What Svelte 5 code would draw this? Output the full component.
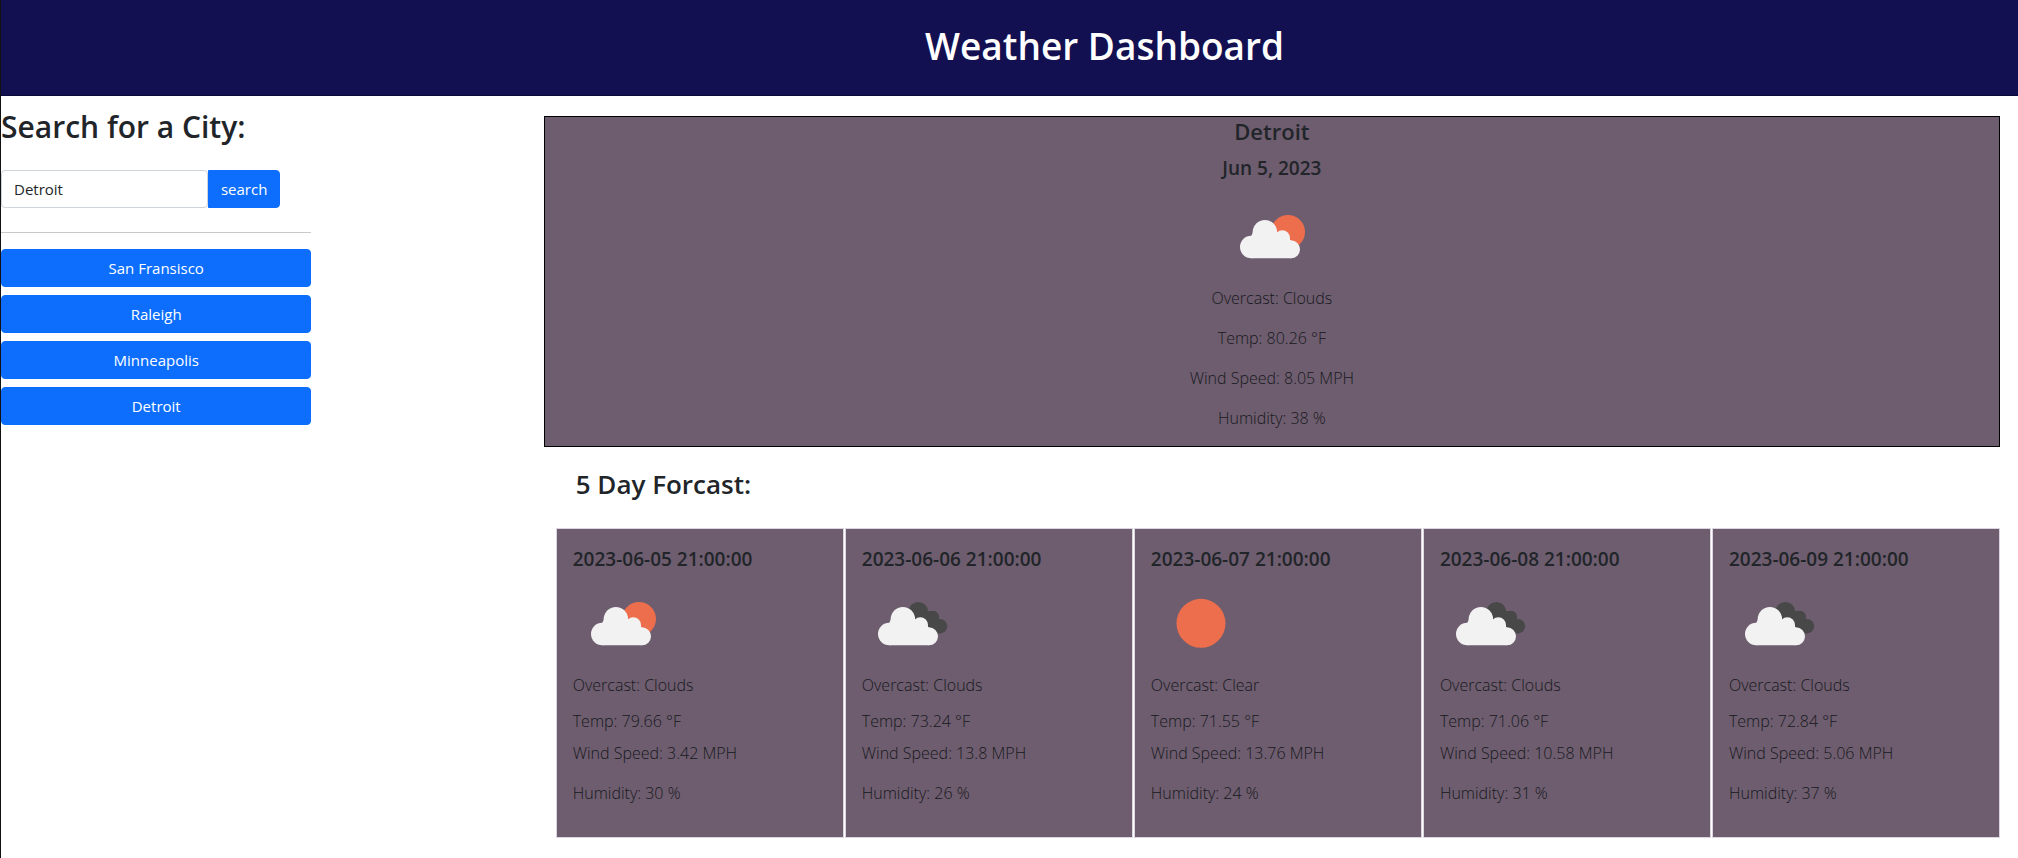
<script>
  let city = $state('Detroit');
  const cities = ['San Fransisco', 'Raleigh', 'Minneapolis', 'Detroit'];
  const current = {
    city: 'Detroit',
    date: 'Jun 5, 2023',
    icon: 'few',
    sky: 'Clouds',
    temp: '80.26',
    wind: '8.05',
    humidity: '38'
  };
  const days = [
    { date: '2023-06-05 21:00:00', icon: 'few', sky: 'Clouds', temp: '79.66', wind: '3.42', humidity: '30' },
    { date: '2023-06-06 21:00:00', icon: 'broken', sky: 'Clouds', temp: '73.24', wind: '13.8', humidity: '26' },
    { date: '2023-06-07 21:00:00', icon: 'clear', sky: 'Clear', temp: '71.55', wind: '13.76', humidity: '24' },
    { date: '2023-06-08 21:00:00', icon: 'broken', sky: 'Clouds', temp: '71.06', wind: '10.58', humidity: '31' },
    { date: '2023-06-09 21:00:00', icon: 'broken', sky: 'Clouds', temp: '72.84', wind: '5.06', humidity: '37' }
  ];
</script>

{#snippet cloud()}
  <g fill="#f2f2f2">
    <circle cx="29.3" cy="61" r="11.3" />
    <circle cx="42.9" cy="46.2" r="12.2" />
    <circle cx="60.3" cy="52" r="7.7" />
    <circle cx="69" cy="63.3" r="9" />
    <path d="M29.3 72.3V49.7L31 46.2H55L60.3 52H68V54.3H69V72.3Z" />
  </g>
{/snippet}

{#snippet weatherIcon(kind)}
  <svg class="icon" viewBox="0 0 100 100" aria-hidden="true">
    {#if kind === 'clear'}
      <circle cx="50" cy="50.3" r="24.5" fill="#ec6e4c" />
    {:else if kind === 'few'}
      <circle cx="66" cy="46" r="17" fill="#ec6e4c" />
      {@render cloud()}
    {:else}
      <g fill="#484848">
        <circle cx="56.3" cy="38.7" r="9.8" />
        <circle cx="70.7" cy="44" r="6.3" />
        <circle cx="78" cy="53.2" r="7.2" />
        <path d="M48 44L65 38L72 38L77 46L78 60.4H60Z" />
      </g>
      <g transform="translate(-2 0)">{@render cloud()}</g>
    {/if}
  </svg>
{/snippet}

<div class="page">
  <header><h1>Weather Dashboard</h1></header>
  <div class="layout">
    <aside>
      <h2><label for="city">Search for a City:</label></h2>
      <form onsubmit={(e) => e.preventDefault()}>
        <input id="city" type="text" bind:value={city} />
        <button class="btn" type="submit">search</button>
      </form>
      <hr />
      <div class="history">
        {#each cities as name}
          <button class="btn" type="button" onclick={() => (city = name)}>{name}</button>
        {/each}
      </div>
    </aside>
    <main>
      <section class="current">
        <h4>{current.city}</h4>
        <h5>{current.date}</h5>
        {@render weatherIcon(current.icon)}
        <p>Overcast: {current.sky}</p>
        <p>Temp: {current.temp} °F</p>
        <p>Wind Speed: {current.wind} MPH</p>
        <p>Humidity: {current.humidity} %</p>
      </section>
      <h3>5 Day Forcast:</h3>
      <section class="forecast">
        {#each days as day}
          <article>
            <h5>{day.date}</h5>
            {@render weatherIcon(day.icon)}
            <p class="sky">Overcast: {day.sky}</p>
            <p class="temp">Temp: {day.temp} °F</p>
            <p>Wind Speed: {day.wind} MPH</p>
            <p>Humidity: {day.humidity} %</p>
          </article>
        {/each}
      </section>
    </main>
  </div>
</div>

<style>
  .page, .page * { box-sizing: border-box; }
  .page {
    min-height: 100vh;
    border-left: 1px solid #111;
    background: #fff;
    color: #212529;
    font: 400 15px/24px "Open Sans", "Noto Sans", sans-serif;
  }
  h1, h2, h3, h4, h5 { margin: 0; font-weight: 600; }
  header {
    padding: 22px 0 25px 190px;
    border-bottom: 1px solid #0a0838;
    background: #131052;
    color: #fff;
    text-align: center;
  }
  h1 { font-size: 37px; line-height: 48px; }
  .layout { display: grid; grid-template-columns: 543fr 1457fr; padding-right: 18px; }
  aside { width: 57.2%; padding-top: 11px; }
  h2 { font-size: 30px; line-height: 40px; white-space: nowrap; }
  form { display: flex; width: 90%; margin-top: 23px; }
  input {
    flex: 1;
    min-width: 0;
    height: 38px;
    padding: 6px 12px;
    border: 1px solid #ced4da;
    border-radius: 4px;
    background: #fff;
    color: #212529;
    font: inherit;
  }
  .btn {
    height: 38px;
    padding: 6px 12px;
    border: 1px solid #0d6efd;
    border-radius: 4px;
    background: #0d6efd;
    color: #fff;
    font: inherit;
    cursor: pointer;
  }
  form .btn { border-radius: 0 4px 4px 0; }
  hr { margin: 24px 0 16px; border: 0; border-top: 1px solid #c8c9ca; }
  .history { display: grid; gap: 8px; }
  main { padding-top: 20px; }
  p { margin: 0 0 16px; color: #16191c; font-size: 16px; font-weight: 300; }
  .icon { display: block; width: 100px; height: 100px; }
  .current { border: 1px solid #000; background: #6e5d6f; text-align: center; }
  .current .icon { margin: 0 auto; }
  h4 { margin-bottom: 8px; font-size: 22px; line-height: 29px; }
  h5 { font-size: 19px; line-height: 28px; }
  .current h5 { margin-bottom: 4px; }
  h3 { padding: 20px 32px 27px; font-size: 26px; line-height: 34px; }
  .forecast { display: grid; grid-template-columns: repeat(5, 1fr); gap: 1px; padding-left: 12px; }
  article { padding: 16px; border: 1px solid #dbd5df; background: #6e5d6f; }
  .sky { margin-bottom: 12px; }
  .temp { margin-bottom: 8px; }
</style>
